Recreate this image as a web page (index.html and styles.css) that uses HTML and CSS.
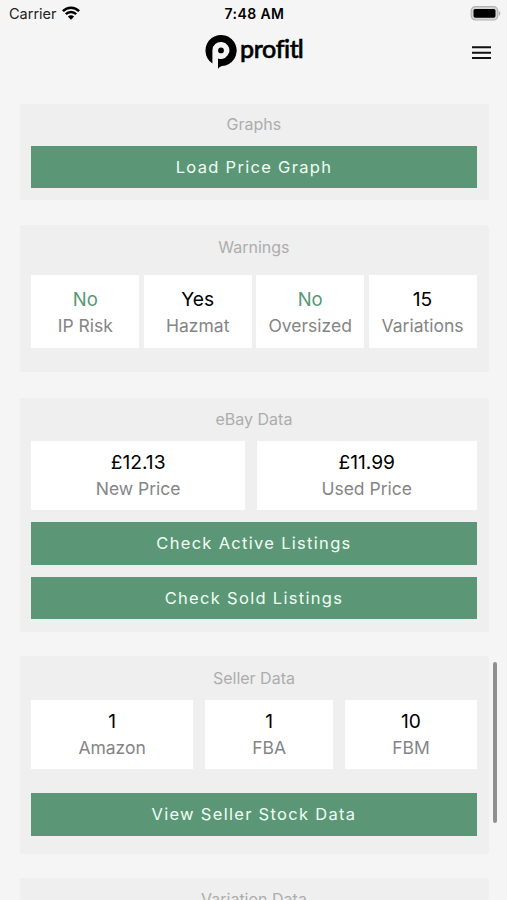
FILE: index.html
```html
<!DOCTYPE html>
<html lang="en">
<head>
<meta charset="utf-8">
<title>profitl</title>
<link rel="stylesheet" href="styles.css">
</head>
<body>
<div class="status">
  <div class="carrier"><span>Carrier</span>
    <svg class="wifi" width="18" height="14" viewBox="0 0 18 14"><g fill="none" stroke="#000" stroke-width="2.5"><path d="M.9 5.1C5.5.5 12.5.5 17.1 5.1"/><path d="M3.8 8.2c2.9-2.9 7.5-2.9 10.4 0"/></g><path d="M5.9 10.5c1.7-1.7 4.5-1.7 6.2 0L9 13.7z"/></svg>
  </div>
  <div class="time">7:48 AM</div>
  <div class="battery"><svg width="31" height="15" viewBox="0 0 31 15"><rect x="1.2" y=".7" width="26.6" height="13.3" rx="4.2" fill="#d5d5d5" stroke="#b2b2b2" stroke-width="1.2"/><rect x="3.5" y="3" width="22" height="8.8" rx="1.7"/><path d="M28.8 5c2 .6 2 4.2 0 4.8z" fill="#b2b2b2"/></svg></div>
</div>
<header class="header">
  <div class="logo">
    <svg width="32" height="36" viewBox="0 0 32 36"><path d="M7.4 29.5A15.6 15.6 0 1 1 17 32.1C15.5 32.5 14 33.5 13 35V24.4A8.5 8.5 0 1 0 7.4 16.5Z"/><circle cx="16" cy="16.4" r="2.9"/></svg>
    <span class="wordmark">profi<span class="joined">t</span>l</span>
  </div>
  <svg class="menu" width="19" height="14" viewBox="0 0 19 14"><path d="M0 1.3h19M0 6.7h19M0 12h19" stroke="#111" stroke-width="2.1"/></svg>
</header>
<main class="cards">
  <section class="card graphs">
    <h2>Graphs</h2>
    <button>Load Price Graph</button>
  </section>
  <section class="card warnings">
    <h2>Warnings</h2>
    <div class="tiles">
      <div class="tile"><b class="ok">No</b><span>IP Risk</span></div>
      <div class="tile"><b>Yes</b><span>Hazmat</span></div>
      <div class="tile"><b class="ok">No</b><span>Oversized</span></div>
      <div class="tile"><b>15</b><span>Variations</span></div>
    </div>
  </section>
  <section class="card ebay">
    <h2>eBay Data</h2>
    <div class="tiles">
      <div class="tile"><b>£12.13</b><span>New Price</span></div>
      <div class="tile"><b>£11.99</b><span>Used Price</span></div>
    </div>
    <button>Check Active Listings</button>
    <button>Check Sold Listings</button>
  </section>
  <section class="card seller">
    <h2>Seller Data</h2>
    <div class="tiles">
      <div class="tile"><b>1</b><span>Amazon</span></div>
      <div class="tile"><b>1</b><span>FBA</span></div>
      <div class="tile"><b>10</b><span>FBM</span></div>
    </div>
    <button>View Seller Stock Data</button>
  </section>
  <section class="card variation">
    <h2>Variation Data</h2>
  </section>
</main>
<div class="scrollbar"></div>
</body>
</html>
```
FILE: styles.css
```css
* { box-sizing: border-box; }
body {
  margin: 0;
  height: 900px;
  overflow: hidden;
  position: relative;
  background: #f5f5f5;
  color: #000;
  font-family: Inter, "Liberation Sans", sans-serif;
}
.status {
  height: 28px;
  padding: 0 6px 0 9px;
  display: grid;
  grid-template-columns: 1fr auto 1fr;
  align-items: center;
  font-size: 14.5px;
  line-height: 28px;
}
.carrier { display: flex; align-items: center; gap: 5px; color: #222; }
.wifi { margin-bottom: 2px; }
.time { font-weight: 600; font-size: 14px; letter-spacing: .4px; margin-right: 1px; }
.battery { display: flex; justify-content: flex-end; margin-bottom: 2px; }
.header {
  height: 76px;
  padding: 6px 16px 0 205px;
  display: flex;
  justify-content: space-between;
  align-items: flex-start;
}
.logo { display: flex; align-items: flex-start; gap: 3px; }
.wordmark {
  font-family: Lato, sans-serif;
  font-weight: 500;
  font-size: 25px;
  line-height: 28px;
  letter-spacing: -.35px;
  font-variant-ligatures: none;
  -webkit-text-stroke: .6px #000;
}
.joined { letter-spacing: -1.2px; }
.menu { margin-top: 12px; }
.cards {
  display: flex;
  flex-direction: column;
  padding: 0 18.5px 0 20px;
}
.card {
  flex: none;
  background: #efefef;
  border-radius: 3px;
  padding: 0 12px 0 11.4px;
}
.card h2 {
  margin: 0;
  font-size: 16px;
  font-weight: 400;
  line-height: 20px;
  padding-top: 11px;
  text-align: center;
  color: #adadad;
}
.card button {
  display: block;
  width: 100%;
  height: 42.9px;
  margin: 0;
  padding: 0;
  border: 0;
  background: #5b9777;
  color: #effff3;
  font: 400 16.5px/42px Inter, sans-serif;
  letter-spacing: 1.3px;
}
.tiles { display: grid; }
.tile {
  background: #fff;
  text-align: center;
  display: flex;
  flex-direction: column;
  justify-content: center;
  padding-top: 1px;
}
.tile b { font-weight: 400; font-size: 19.2px; line-height: 27px; }
.tile span { font-size: 17.5px; line-height: 26px; color: #858585; }
.tile b.ok { color: #559878; font-size: 18.5px; }
.graphs { height: 96px; margin-bottom: 25px; }
.graphs h2 { padding-top: 10px; }
.graphs button { margin-top: 11.6px; }
.warnings { height: 147px; margin-bottom: 26px; }
.warnings h2 { padding-top: 12px; }
.warnings .tiles { grid-template-columns: repeat(4, 1fr); gap: 4.5px; height: 73px; margin-top: 18px; }
.ebay { height: 234px; margin-bottom: 24px; }
.ebay .tiles { grid-template-columns: 213.5px 1fr; gap: 12px; height: 69px; margin: 11.7px 0 12px; }
.ebay button + button { margin-top: 12px; }
.seller { height: 198px; margin-bottom: 24px; }
.seller h2 { padding-top: 12px; }
.seller .tiles { grid-template-columns: 161.5px 128.5px 1fr; gap: 12px; height: 69px; margin: 12px 0 24px; }
.seller .tile { padding-top: 0; }
.variation { height: 22px; overflow: hidden; }
.scrollbar {
  position: absolute;
  left: 493px;
  top: 662px;
  width: 4px;
  height: 161px;
  border-radius: 2px;
  background: #8f8f8f;
}
```
